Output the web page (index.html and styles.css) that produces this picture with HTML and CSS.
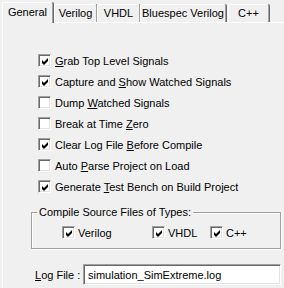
FILE: index.html
```html
<!DOCTYPE html>
<html>
<head>
<meta charset="utf-8">
<link rel="stylesheet" href="styles.css">
</head>
<body>
<div class="tabs">
  <div class="tab active w-general">General</div>
  <div class="tab w-verilog">Verilog</div>
  <div class="tab w-vhdl">VHDL</div>
  <div class="tab w-bsv">Bluespec Verilog</div>
  <div class="tab w-cpp">C++</div>
</div>
<div class="panel">
  <div class="options">
    <label class="row"><span class="cb checked"><svg width="9" height="9" viewBox="0 0 9 9"><polygon points="1,3 3,5 7,1 7,4 3,8 1,6"/></svg></span><span><u>G</u>rab Top Level Signals</span></label>
    <label class="row"><span class="cb checked"><svg width="9" height="9" viewBox="0 0 9 9"><polygon points="1,3 3,5 7,1 7,4 3,8 1,6"/></svg></span><span>Capture and <u>S</u>how Watched Signals</span></label>
    <label class="row"><span class="cb"></span><span>Dump <u>W</u>atched Signals</span></label>
    <label class="row"><span class="cb"></span><span>Break at Time <u>Z</u>ero</span></label>
    <label class="row"><span class="cb checked"><svg width="9" height="9" viewBox="0 0 9 9"><polygon points="1,3 3,5 7,1 7,4 3,8 1,6"/></svg></span><span>Clear Log File <u>B</u>efore Compile</span></label>
    <label class="row"><span class="cb"></span><span>Auto <u>P</u>arse Project on Load</span></label>
    <label class="row"><span class="cb checked"><svg width="9" height="9" viewBox="0 0 9 9"><polygon points="1,3 3,5 7,1 7,4 3,8 1,6"/></svg></span><span>Generate <u>T</u>est Bench on Build Project</span></label>
  </div>
  <fieldset class="group">
    <legend>Compile Source Files of Types:</legend>
    <div class="types">
      <label class="type t-verilog"><span class="cb checked"><svg width="9" height="9" viewBox="0 0 9 9"><polygon points="1,3 3,5 7,1 7,4 3,8 1,6"/></svg></span><span>Verilog</span></label>
      <label class="type t-vhdl"><span class="cb checked"><svg width="9" height="9" viewBox="0 0 9 9"><polygon points="1,3 3,5 7,1 7,4 3,8 1,6"/></svg></span><span>VHDL</span></label>
      <label class="type"><span class="cb checked"><svg width="9" height="9" viewBox="0 0 9 9"><polygon points="1,3 3,5 7,1 7,4 3,8 1,6"/></svg></span><span>C++</span></label>
    </div>
  </fieldset>
  <div class="logrow">
    <span class="loglabel"><u>L</u>og File :</span>
    <div class="input">simulation_SimExtreme.log</div>
  </div>
</div>
</body>
</html>
```
FILE: styles.css
```css
html, body {
  margin: 0;
  padding: 0;
}
body {
  width: 284px;
  height: 288px;
  overflow: hidden;
  background: #f0f0f0;
  font-family: "Liberation Sans", Arial, sans-serif;
  font-size: 11px;
  color: #000;
}
u {
  text-decoration: underline;
  text-underline-offset: 1px;
}
.tabs {
  display: flex;
  align-items: flex-end;
  height: 22px;
  padding-left: 2px;
  box-sizing: border-box;
}
.tab {
  box-sizing: border-box;
  height: 18px;
  display: flex;
  justify-content: center;
  align-items: center;
  padding-bottom: 1px;
  border-top: 1px solid #fff;
  border-left: 1px solid #fff;
  border-right: 1px solid #a0a0a0;
  box-shadow: 1px 0 0 #696969;
  border-radius: 2px 2px 0 0;
  background: #f0f0f0;
}
.tab.active {
  height: 21px;
  margin-bottom: -1px;
  padding-bottom: 3px;
  position: relative;
  z-index: 1;
}
.w-general { width: 51px; margin-right: 1px; }
.w-verilog { width: 43px; }
.w-vhdl { width: 43px; }
.w-bsv { width: 86px; margin-right: 2px; }
.w-cpp { width: 41px; }
.panel {
  margin-left: 2px;
  border-top: 1px solid #fff;
  border-left: 1px solid #fff;
  height: 266px;
}
.options {
  padding-top: 27px;
  display: flex;
  flex-direction: column;
}
.row {
  display: flex;
  align-items: center;
  height: 21px;
  padding-left: 35px;
  gap: 4px;
}
.cb {
  box-sizing: border-box;
  width: 13px;
  height: 13px;
  flex: none;
  background: #fff;
  border: 1px solid;
  border-color: #a0a0a0 #fff #fff #a0a0a0;
  box-shadow: inset 1px 1px 0 #696969, inset -1px -1px 0 #e3e3e3;
  display: flex;
  align-items: center;
  justify-content: center;
  padding: 1px 0 0 1px;
}
.cb svg {
  display: block;
  fill: #000;
}
.group {
  box-sizing: border-box;
  width: 250px;
  margin: 9px 0 0 28px;
  padding: 0 0 9px 0;
  border: 1px solid #a0a0a0;
  box-shadow: inset 1px 1px 0 #fff, 1px 1px 0 #fff;
}
.group legend {
  margin-left: 5px;
  padding: 0 2px;
  line-height: 13px;
  background: #f0f0f0;
}
.types {
  display: flex;
  align-items: center;
  height: 13px;
  margin-top: 7px;
  padding-left: 30px;
}
.type {
  display: flex;
  align-items: center;
  gap: 3px;
}
.t-verilog { width: 90px; }
.t-vhdl { width: 58px; }
.logrow {
  display: flex;
  align-items: center;
  margin-top: 15px;
  padding-left: 32px;
}
.loglabel {
  width: 48px;
}
.input {
  box-sizing: border-box;
  width: 198px;
  height: 21px;
  background: #fff;
  border: 1px solid;
  border-color: #a0a0a0 #fff #fff #a0a0a0;
  box-shadow: inset 1px 1px 0 #696969, inset -1px -1px 0 #e3e3e3;
  padding: 0 0 0 4px;
  display: flex;
  align-items: center;
}
```
